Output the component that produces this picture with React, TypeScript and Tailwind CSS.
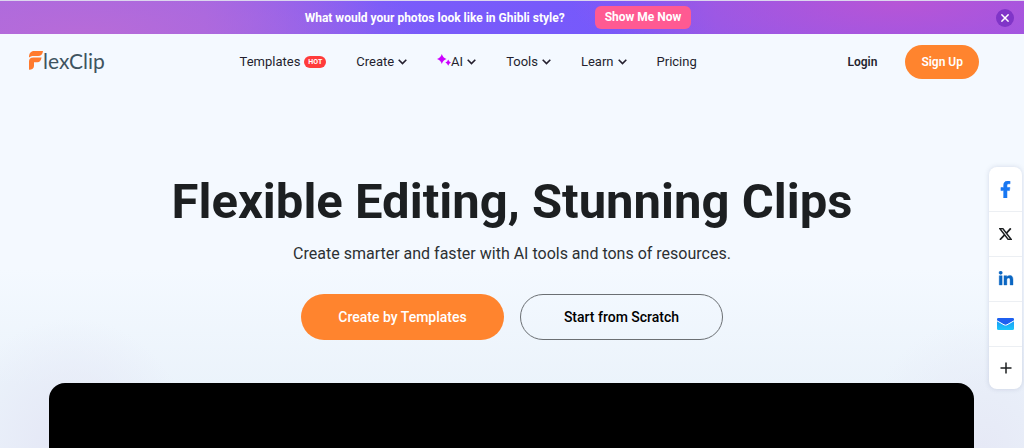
import { useState } from "react";
import { FaFacebookF, FaLinkedinIn } from "react-icons/fa";

type NavItem = {
    label: string
    hot?: boolean
    sparkle?: boolean
    menu?: boolean
}

const navItems: NavItem[] = [
    {label: 'Templates', hot: true},
    {label: 'Create', menu: true},
    {label: 'AI', sparkle: true, menu: true},
    {label: 'Tools', menu: true},
    {label: 'Learn', menu: true},
    {label: 'Pricing'},
]

function Chevron()
{
    return <svg viewBox="0 0 9 6" className="ml-1 h-[6px] w-[9px]" fill="none" stroke="currentColor" strokeWidth="1.6" aria-hidden="true">
        <path d="M0.700 0.800 4.500 4.600 8.300 0.800" />
    </svg>
}

function Sparkles()
{
    return <svg viewBox="0 0 14 12" className="mb-1 h-3 w-[14px] text-[#cc00ff]" fill="currentColor" aria-hidden="true">
        <path d="M4.800 0Q6 3.800 9.600 5 6 6.200 4.800 10 3.600 6.200 0 5 3.600 3.800 4.800 0Z" />
        <path d="M11.200 5.500Q12 7.800 14 8.600 12 9.400 11.200 11.700 10.400 9.400 8.400 8.600 10.400 7.800 11.200 5.500Z" />
    </svg>
}

function Logo()
{
    return <a href="#" aria-label="FlexClip" className="flex h-7 items-center text-[#3f545f]">
        <svg viewBox="0 0 14 19" className="mb-1 h-[19px] w-[14px]" fill="#ff7a2e" aria-hidden="true">
            <path d="M14 0C13.600 3.600 12 5 9.200 5H4.500C2.500 5 1 5.500 0 6.600 0 2.200 1.800 0 5.200 0Z" />
            <path d="M12.600 6.500C12 9.700 10.800 11.200 8.400 11.200H5V15C5 17.400 3.200 18.800 0 18.800V10.400C0 7.900 1.500 6.500 4.200 6.500Z" />
        </svg>
        <span className="mb-[2px] font-[Lato,sans-serif] text-[21px] leading-7">lexClip</span>
    </a>
}

function XIcon()
{
    return <svg viewBox="0 0 13 12" className="h-3 w-[13px]" fill="none" stroke="#1c1f21" aria-hidden="true">
        <path d="M0.900 0.600H3.800L12.100 11.400H9.200Z" strokeWidth="1.500" />
        <path d="M11.800 0.300 7.200 5.300M5.600 6.900 0.900 11.800" strokeWidth="1.700" />
    </svg>
}

function MailIcon()
{
    return <svg viewBox="0 0 17 12" className="h-3 w-[17px]" aria-hidden="true">
        <defs>
            <linearGradient id="mail" x1="0" y1="0" x2="0" y2="1">
                <stop offset="0" stopColor="#1d8cf5" />
                <stop offset="1" stopColor="#1cc8fb" />
            </linearGradient>
        </defs>
        <rect width="17" height="12" rx="1.5" fill="url(#mail)" />
        <path d="M1.500 0H15.500Q17 0 17 1.500V2.500L8.500 7.500 0 2.500V1.500Q0 0 1.500 0Z" fill="#1f5ff0" />
        <path d="M0 2.800 7 6.800Q8.500 7.600 10 6.800L17 2.800" fill="none" stroke="#fff" strokeWidth="1" />
    </svg>
}

function PlusIcon()
{
    return <svg viewBox="0 0 12 12" className="size-3" stroke="#1c1f21" strokeWidth="1.5" aria-hidden="true">
        <path d="M6 0.500V11.500M0.500 6H11.500" />
    </svg>
}

const shareLinks = [
    {name: 'Facebook', icon: <FaFacebookF size={17} color="#1877f2" stroke="#1877f2" strokeWidth={16} />},
    {name: 'X', icon: <XIcon />},
    {name: 'LinkedIn', icon: <FaLinkedinIn size={16} color="#0a66c2" stroke="#0a66c2" strokeWidth={12} />},
    {name: 'Email', icon: <MailIcon />},
]

function Banner({onClose}: {onClose: () => void})
{
    return <div className="relative flex h-[34px] shrink-0 items-center justify-center gap-[30px] border-t border-[#dcd6ee] bg-[radial-gradient(ellipse_340px_90px_at_8%_100%,#b76bd8,transparent),radial-gradient(ellipse_330px_90px_at_88%_0%,#b755d6,transparent),linear-gradient(90deg,#a56ae2_0%,#9e66e6_20%,#7a5cfa_37%,#7659fb_60%,#8a5aee_70%,#9056ea_100%)] pr-7 text-xs font-bold text-white">
        <p>What would your photos look like in Ghibli style?</p>
        <a href="#" className="rounded-md bg-[#ff5a92] px-[10px] leading-[23px]">Show Me Now</a>
        <button onClick={onClose} aria-label="Close" className="absolute top-2 right-[10px] flex size-[18px] items-center justify-center rounded-full bg-[#8035c8]">
            <svg viewBox="0 0 8 8" className="size-2" stroke="#fff" strokeWidth="1.5" aria-hidden="true">
                <path d="M0.400 0.400 7.600 7.600M7.600 0.400 0.400 7.600" />
            </svg>
        </button>
    </div>
}

function Header()
{
    return <header className="flex h-14 shrink-0 items-center pr-[45px] pl-[29px] text-[13px] text-[#241f2e]">
        <Logo />
        <nav className="mr-4 flex flex-1 items-center justify-center gap-[30px]">
            {navItems.map(item => {
                const content = <>
                    {item.sparkle && <Sparkles />}
                    {item.label}
                    {item.hot && <span className="ml-1 rounded-full bg-[#ff3b3b] px-1 text-[7px] leading-3 font-bold text-white">HOT</span>}
                    {item.menu && <Chevron />}
                </>
                return item.menu
                    ? <button key={item.label} className="flex items-center">{content}</button>
                    : <a key={item.label} href="#" className="flex items-center">{content}</a>
            })}
        </nav>
        <a href="#" className="text-xs font-semibold">Login</a>
        <a href="#" className="ml-7 rounded-full bg-[#ff842e] px-4 text-xs leading-[34px] font-semibold text-white">Sign Up</a>
    </header>
}

function ShareBar()
{
    return <aside className="fixed top-[167px] right-[2px] w-[33px] divide-y divide-[#eceff3] rounded-lg bg-white shadow-[0_0_5px_rgba(60,80,120,0.18)]">
        {shareLinks.map(link => <a key={link.name} href="#" aria-label={link.name} className="flex h-[45px] items-center justify-center">
            {link.icon}
        </a>)}
        <button aria-label="More" className="flex h-[42px] w-full items-center justify-center">
            <PlusIcon />
        </button>
    </aside>
}

function App()
{
    const [showBanner, setShowBanner] = useState(true)

    return <div className="flex h-screen flex-col overflow-hidden bg-[#f4f9ff] bg-[radial-gradient(ellipse_120px_130px_at_7%_100%,#e4e6f5,transparent),radial-gradient(ellipse_120px_130px_at_96%_100%,#e6e9f6,transparent),linear-gradient(180deg,#f4f9ff_60%,#ebf3fb_86%)] font-['Roboto',sans-serif]">
        {showBanner && <Banner onClose={() => setShowBanner(false)} />}
        <Header />
        <main className="flex flex-1 flex-col items-center pt-[82px] text-center">
            <h1 className="text-[49px] leading-[60px] font-bold text-[#1c1f21]">Flexible Editing, Stunning Clips</h1>
            <p className="mt-[10px] text-base leading-6 text-[#2c3033]">Create smarter and faster with AI tools and tons of resources.</p>
            <div className="mt-7 flex gap-4 text-sm font-medium">
                <button className="h-[46px] w-[203px] rounded-full bg-[#ff842e] text-white">Create by Templates</button>
                <button className="h-[46px] w-[203px] rounded-full border border-[#6b6f73] text-black">Start from Scratch</button>
            </div>
            <div className="mt-[43px] w-full flex-1 pr-[50px] pl-[49px]">
                <div className="h-full rounded-t-2xl bg-black" />
            </div>
        </main>
        <ShareBar />
    </div>
}

export default App;
